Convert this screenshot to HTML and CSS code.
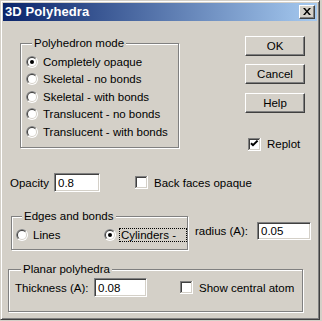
FILE: index.html
```html
<!DOCTYPE html>
<html>
<head>
<meta charset="utf-8">
<link rel="stylesheet" href="styles.css">
</head>
<body>
<svg class="defs" width="0" height="0">
  <symbol id="radio" viewBox="0 0 12 12">
    <circle cx="6" cy="6" r="6" fill="#ffffff"/>
    <path d="M1.757 10.243 A6 6 0 0 1 10.243 1.757 Z" fill="#808080"/>
    <circle cx="6" cy="6" r="5" fill="#d4d0c8"/>
    <path d="M2.464 9.536 A5 5 0 0 1 9.536 2.464 Z" fill="#404040"/>
    <circle cx="6" cy="6" r="4" fill="#ffffff"/>
  </symbol>
  <symbol id="check" viewBox="0 0 13 13">
    <rect x="0" y="0" width="13" height="13" fill="#ffffff"/>
    <rect x="0" y="0" width="12" height="1" fill="#808080"/>
    <rect x="0" y="0" width="1" height="12" fill="#808080"/>
    <rect x="1" y="1" width="10" height="1" fill="#404040"/>
    <rect x="1" y="1" width="1" height="10" fill="#404040"/>
    <rect x="1" y="11" width="11" height="1" fill="#d4d0c8"/>
    <rect x="11" y="1" width="1" height="11" fill="#d4d0c8"/>
  </symbol>
</svg>
<div class="window">
  <div class="titlebar">
    <span class="title">3D Polyhedra</span>
    <span class="close">
      <svg width="8" height="7" viewBox="0 0 8 7"><path d="M0 0h2l2 2.5l2-2.5h2l-3 3.5l3 3.5h-2l-2-2.5l-2 2.5h-2l3-3.5z" fill="#000"/></svg>
    </span>
  </div>
  <div class="client">
    <div class="top-row">
      <div class="group mode-group">
        <span class="group-label">Polyhedron mode</span>
        <div class="radio-list">
          <div class="radio-row"><svg class="radio" width="12" height="12"><use href="#radio"/><circle cx="6" cy="6" r="2" fill="#000"/></svg><span>Completely opaque</span></div>
          <div class="radio-row"><svg class="radio" width="12" height="12"><use href="#radio"/></svg><span>Skeletal - no bonds</span></div>
          <div class="radio-row"><svg class="radio" width="12" height="12"><use href="#radio"/></svg><span>Skeletal - with bonds</span></div>
          <div class="radio-row"><svg class="radio" width="12" height="12"><use href="#radio"/></svg><span>Translucent - no bonds</span></div>
          <div class="radio-row"><svg class="radio" width="12" height="12"><use href="#radio"/></svg><span>Translucent - with bonds</span></div>
        </div>
      </div>
      <div class="button-col">
        <div class="btn">OK</div>
        <div class="btn btn-cancel">Cancel</div>
        <div class="btn btn-help">Help</div>
        <div class="check-row replot">
          <svg class="checkbox" width="13" height="13"><use href="#check"/><path d="M3 5.2 L5 7.2 L9.6 2.6" stroke="#000" stroke-width="2" fill="none"/></svg>
          <span>Replot</span>
        </div>
      </div>
    </div>

    <div class="opacity-row">
      <span class="opacity-label">Opacity</span>
      <div class="field opacity-field">0.8</div>
      <div class="check-row backfaces">
        <svg class="checkbox" width="13" height="13"><use href="#check"/></svg>
        <span>Back faces opaque</span>
      </div>
    </div>

    <div class="edges-row">
      <div class="group edges-group">
        <span class="group-label">Edges and bonds</span>
        <div class="edges-options">
          <div class="radio-row lines-opt"><svg class="radio" width="12" height="12"><use href="#radio"/></svg><span>Lines</span></div>
          <div class="radio-row cyl-opt"><svg class="radio" width="12" height="12"><use href="#radio"/><circle cx="6" cy="6" r="2" fill="#000"/></svg><span class="focus">Cylinders -</span></div>
        </div>
      </div>
      <span class="radius-label">radius (A):</span>
      <div class="field radius-field">0.05</div>
    </div>

    <div class="group planar-group">
      <span class="group-label">Planar polyhedra</span>
      <div class="planar-row">
        <span class="thick-label">Thickness (A):</span>
        <div class="field thick-field">0.08</div>
        <div class="check-row central">
          <svg class="checkbox" width="13" height="13"><use href="#check"/></svg>
          <span>Show central atom</span>
        </div>
      </div>
    </div>
  </div>
</div>
</body>
</html>
```

FILE: styles.css
```css
* { box-sizing: border-box; }

html, body {
  margin: 0;
  padding: 0;
  background: #d4d0c8;
}

body {
  font-family: "Liberation Sans", Arial, sans-serif;
  font-size: 11.5px;
  line-height: 14px;
  color: #000;
}

.defs {
  position: absolute;
  width: 0;
  height: 0;
}

.window {
  width: 320px;
  height: 320px;
  background: #d4d0c8;
  border: 1px solid;
  border-color: #d4d0c8 #404040 #404040 #d4d0c8;
  box-shadow: inset 1px 1px 0 #ffffff, inset -1px -1px 0 #808080;
  padding: 2px;
  display: flex;
  flex-direction: column;
}

.titlebar {
  height: 18px;
  flex: none;
  background: linear-gradient(to right, #0a246a, #a6caf0);
  display: flex;
  align-items: center;
  justify-content: space-between;
  padding: 0 2px 0 2px;
}

.title {
  color: #fff;
  font-weight: bold;
  font-size: 13px;
  letter-spacing: 0.1px;
}

.close {
  width: 16px;
  height: 14px;
  background: #d4d0c8;
  border: 1px solid;
  border-color: #fff #404040 #404040 #fff;
  box-shadow: inset -1px -1px 0 #808080;
  display: flex;
  align-items: center;
  justify-content: center;
  padding: 0 1px 1px 0;
}

.close svg { display: block; }

.client {
  flex: 1;
  display: flex;
  flex-direction: column;
}

.top-row {
  display: flex;
  align-items: flex-start;
  height: 127px;
  flex: none;
}

.group {
  border: 1px solid #808080;
  box-shadow: inset 1px 1px 0 #ffffff, 1px 1px 0 #ffffff;
  display: flex;
  flex-direction: column;
  flex: none;
}

.group-label {
  align-self: flex-start;
  background: #d4d0c8;
  padding: 0 2px;
  margin: -8px 0 0 6px;
  height: 14px;
}

.mode-group {
  margin: 22px 0 0 17px;
  width: 159px;
  height: 105px;
  padding-left: 5px;
}

.radio-list {
  margin-top: 3px;
  display: flex;
  flex-direction: column;
}

.radio-row {
  display: flex;
  align-items: center;
  height: 17.5px;
  white-space: nowrap;
}

.radio {
  display: block;
  flex: none;
  margin-right: 5px;
}

.checkbox {
  display: block;
  flex: none;
}

.button-col {
  margin: 15px 0 0 66px;
  display: flex;
  flex-direction: column;
}

.btn {
  width: 60px;
  height: 20px;
  border: 1px solid;
  border-color: #fff #404040 #404040 #fff;
  box-shadow: inset -1px -1px 0 #808080;
  display: flex;
  align-items: center;
  justify-content: center;
  padding-bottom: 1px;
}

.btn-cancel { margin-top: 8px; }
.btn-help { margin-top: 9px; }

.check-row {
  display: flex;
  align-items: center;
  white-space: nowrap;
}

.check-row .checkbox { margin-right: 6px; }

.replot {
  margin: 24px 0 0 3px;
}

.opacity-row {
  display: flex;
  align-items: center;
  margin-top: 25px;
  height: 19px;
  flex: none;
}

.opacity-label {
  margin-left: 7px;
  width: 44px;
}

.field {
  background: #fff;
  border: 1px solid;
  border-color: #808080 #fff #fff #808080;
  box-shadow: inset 1px 1px 0 #404040, inset -1px -1px 0 #d4d0c8;
  padding: 0 0 0 3px;
  display: flex;
  align-items: center;
}

.opacity-field {
  width: 46px;
  height: 19px;
}

.backfaces { margin-left: 35px; }

.edges-row {
  display: flex;
  align-items: flex-start;
  margin-top: 24px;
  flex: none;
}

.edges-group {
  margin-left: 8px;
  width: 177px;
  height: 34px;
  padding-left: 4px;
}

.edges-options {
  display: flex;
  margin-top: 3px;
}

.lines-opt { width: 88px; }

.focus {
  border: 1px dotted #000;
  padding: 0 1px;
  margin-left: -2px;
  height: 14px;
  line-height: 12px;
  width: 68px;
}

.radius-label {
  margin: 8px 0 0 7px;
  width: 62px;
}

.radius-field {
  margin-top: 6px;
  width: 54px;
  height: 18px;
}

.planar-group {
  margin: 19px 0 0 5px;
  width: 295px;
  height: 43px;
  padding-left: 6px;
}

.planar-row {
  display: flex;
  align-items: center;
  margin-top: 2px;
  height: 19px;
}

.thick-label { width: 79px; }

.thick-field {
  width: 53px;
  height: 19px;
}

.central { margin-left: 33px; }
```
